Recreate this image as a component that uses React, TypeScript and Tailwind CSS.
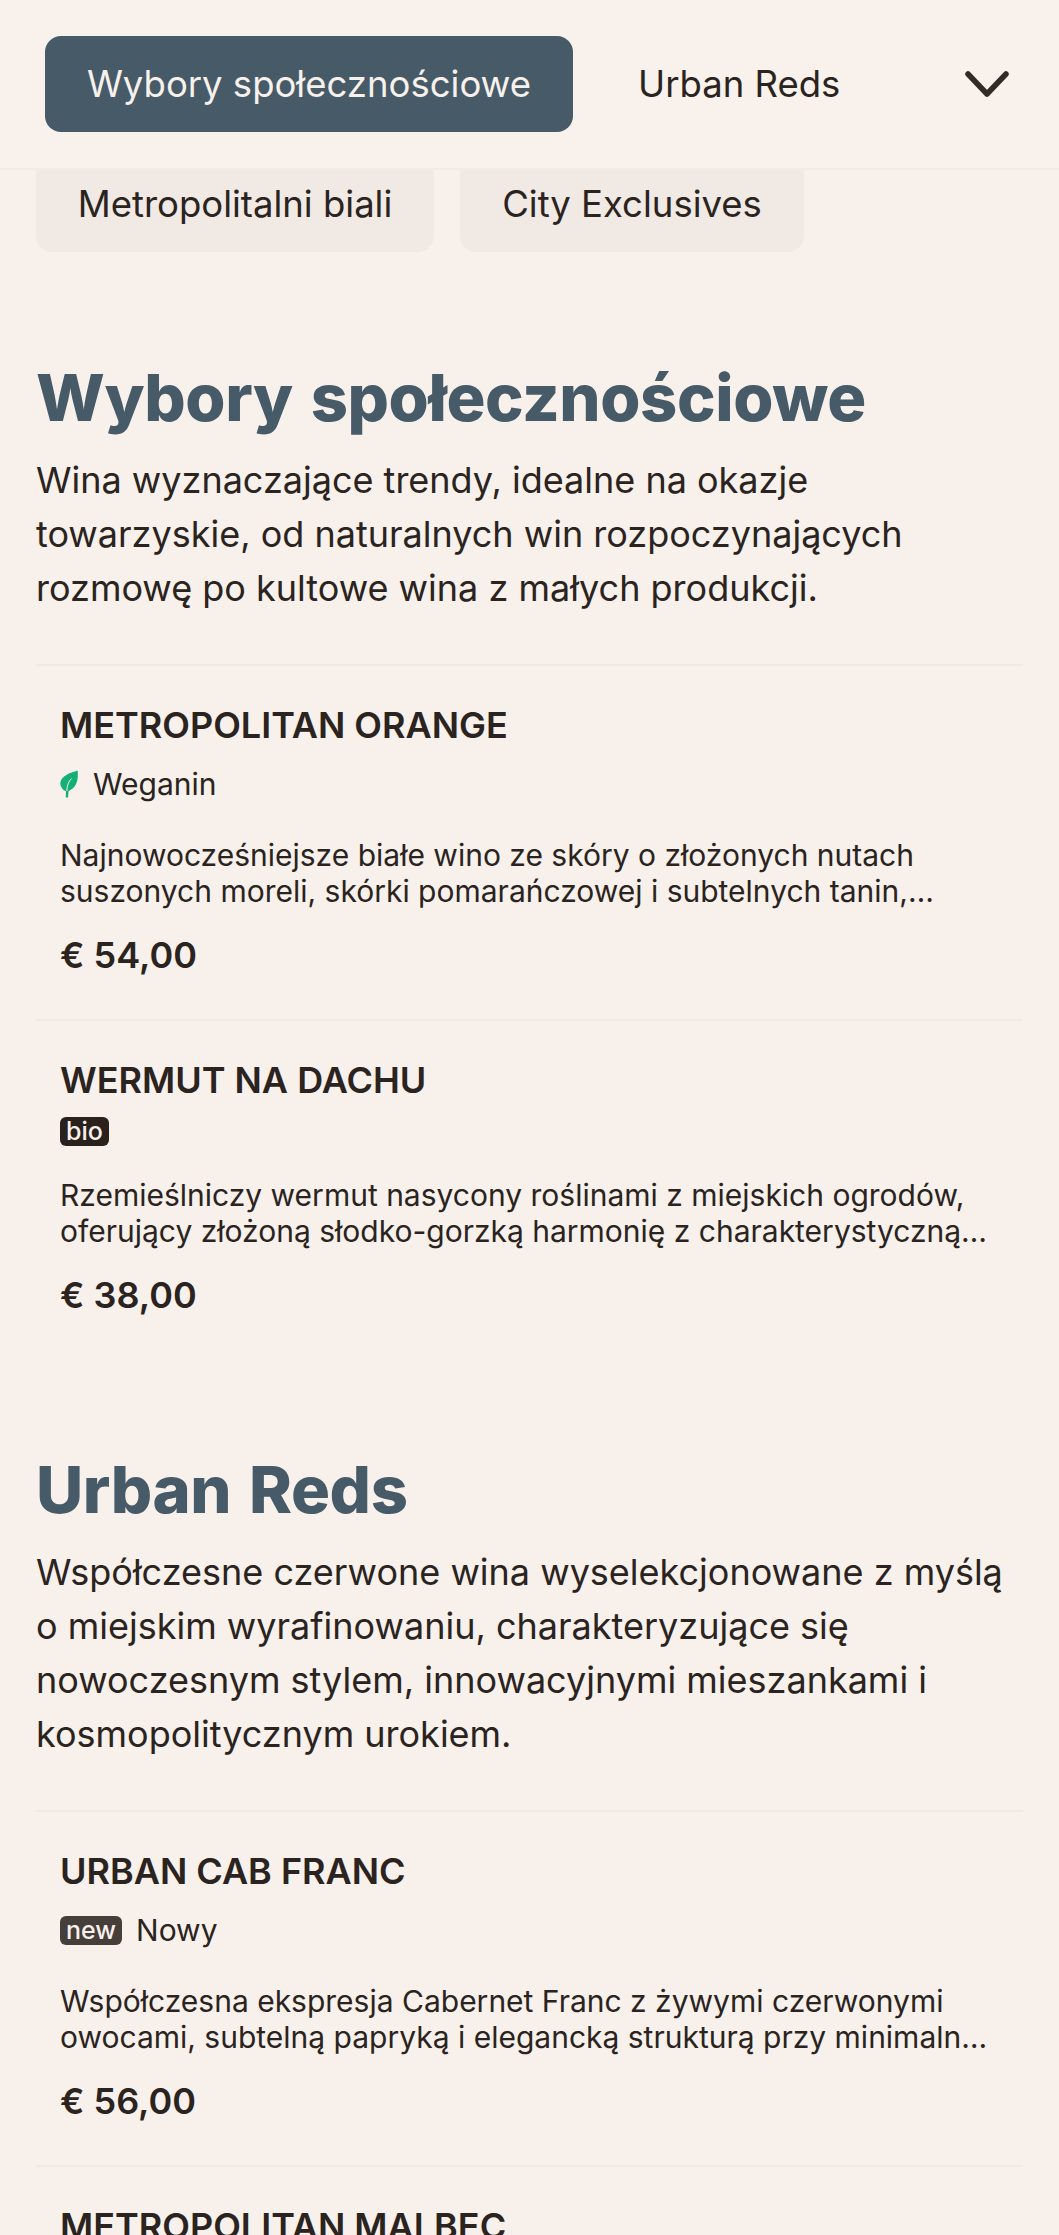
const ink = "text-[#2a2320]";

function Leaf() {
  return (
    <svg viewBox="0 0 18 28" className="h-[28px] w-[18px] shrink-0" aria-hidden="true">
      <path d="M17.6 0.5C18.6 9 17 18 8.6 21L8 27.5H5.8L6 21.2C2 19.5 0 16 0.4 12.5C1.2 6 10 2.8 17.6 0.5Z" fill="#12b173" />
      <path d="M6.8 21C7 15.5 8.6 11.5 11.4 8.5" stroke="#f7f0eb" strokeWidth="1" fill="none" />
    </svg>
  );
}

function Item({ title, tag, desc, price }: { title: string; tag?: React.ReactNode; desc: string; price: string }) {
  return (
    <article className="border-t-2 border-[#f0e9e4] px-6 pt-[37px] pb-[42px]">
      <h3 className={`text-[36px] font-semibold leading-[44px] ${ink}`}>{title}</h3>
      <div className="mt-[15px] flex items-center">{tag}</div>
      <p className={`mt-[31px] line-clamp-2 text-[30px] leading-[36px] ${ink}`}>{desc}</p>
      <p className={`mt-[24px] text-[36px] font-semibold leading-[44px] ${ink}`}>{price}</p>
    </article>
  );
}

function Section({ title, lines, children }: { title: string; lines: string; children: React.ReactNode }) {
  return (
    <section className="px-9">
      <h2 className="text-[65px] font-extrabold leading-[72px] tracking-[-0.4px] [word-spacing:4px] text-[#465a68]">{title}</h2>
      <p className={`mt-[19px] text-[36px] leading-[54px] ${ink}`}>{lines}</p>
      <div className="mt-[49px]">{children}</div>
    </section>
  );
}

export default function App() {
  return (
    <div className="h-[2235px] overflow-hidden bg-[#f7f0eb] font-['Inter',sans-serif]">
      <header className="flex h-[170px] items-center border-b-2 border-[#f2ece6] bg-[#f9f2ec] pl-[45px]">
        <span className="flex h-[96px] w-[528px] items-center justify-center rounded-[16px] bg-[#465a68] text-[36.5px] text-[#f7f0eb]">
          Wybory społecznościowe
        </span>
        <span className={`ml-[65px] text-[36.5px] ${ink}`}>Urban Reds</span>
        <svg viewBox="0 0 44 28" className="ml-auto mr-[50px] h-[28px] w-[44px]" fill="none" stroke="#332b27" strokeWidth="5.5" strokeLinecap="round" strokeLinejoin="round" aria-hidden="true">
          <path d="M3 4l19 20L41 4" />
        </svg>
      </header>

      <div className="flex gap-[26px] pl-9">
        <span className={`flex h-[82px] w-[398px] items-center justify-center rounded-b-[16px] bg-[#f0e9e4] pb-[14px] text-[36.5px] ${ink}`}>Metropolitalni biali</span>
        <span className={`flex h-[82px] w-[344px] items-center justify-center rounded-b-[16px] bg-[#f0e9e4] pb-[14px] text-[36.5px] ${ink}`}>City Exclusives</span>
      </div>

      <div className="mt-[110px]">
        <Section
          title="Wybory społecznościowe"
          lines="Wina wyznaczające trendy, idealne na okazje towarzyskie, od naturalnych win rozpoczynających rozmowę po kultowe wina z małych produkcji."
        >
          <Item
            title="METROPOLITAN ORANGE"
            tag={<><Leaf /><span className={`ml-[15px] text-[30px] leading-[44px] ${ink}`}>Weganin</span></>}
            desc="Najnowocześniejsze białe wino ze skóry o złożonych nutach suszonych moreli, skórki pomarańczowej i subtelnych tanin, wyrafinowanej kwasowości i długiego finiszu."
            price="€ 54,00"
          />
          <Item
            title="WERMUT NA DACHU"
            tag={<span className="rounded-[6px] bg-[#2a211d] px-[6px] text-[25px] font-medium leading-[29px] text-[#f7f0eb]">bio</span>}
            desc="Rzemieślniczy wermut nasycony roślinami z miejskich ogrodów, oferujący złożoną słodko-gorzką harmonię z charakterystyczną wyrazistością ziół i skórki cytrusów."
            price="€ 38,00"
          />
        </Section>

        <div className="mt-[95px]">
          <Section
            title="Urban Reds"
            lines="Współczesne czerwone wina wyselekcjonowane z myślą o miejskim wyrafinowaniu, charakteryzujące się nowoczesnym stylem, innowacyjnymi mieszankami i kosmopolitycznym urokiem."
          >
            <Item
              title="URBAN CAB FRANC"
              tag={<><span className="rounded-[6px] bg-[#463e3a] px-[6px] text-[25px] font-medium leading-[29px] text-[#f7f0eb]">new</span><span className={`ml-[14px] text-[30px] leading-[44px] ${ink}`}>Nowy</span></>}
              desc="Współczesna ekspresja Cabernet Franc z żywymi czerwonymi owocami, subtelną papryką i elegancką strukturą przy minimalnej interwencji w winnicy oraz piwnicy przez cały rok."
              price="€ 56,00"
            />
            <Item title="METROPOLITAN MALBEC" desc="" price="" />
          </Section>
        </div>
      </div>
    </div>
  );
}
